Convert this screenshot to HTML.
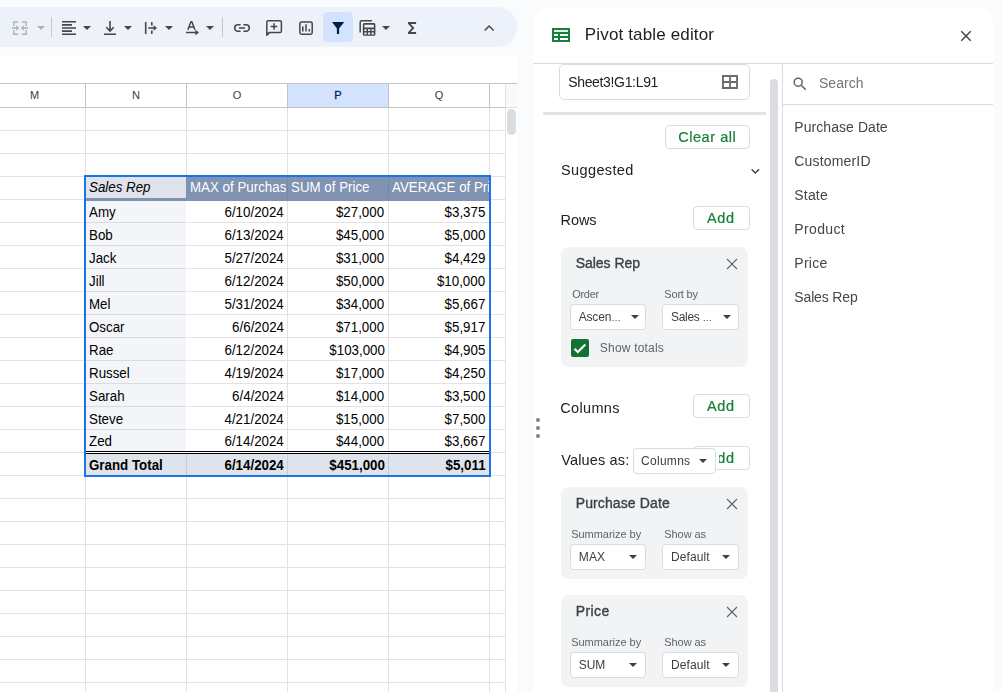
<!DOCTYPE html>
<html lang="en">
<head>
<meta charset="utf-8">
<title>Pivot table editor</title>
<style>
*{box-sizing:border-box;margin:0;padding:0}
html,body{width:1001px;height:692px;overflow:hidden;background:#f9fbfd}
body{position:relative;font-family:"Liberation Sans",Arial,sans-serif;font-size:13px;color:#202124}
.abs,.t,svg.i{position:absolute}
.t{white-space:nowrap;line-height:20px;height:20px}
#toolbar{position:absolute;left:-30px;top:7px;width:547px;height:40px;background:#edf2fa;border-radius:20px}
#tbicons{position:absolute;left:0;top:0;width:517px;height:55px}
.sep{position:absolute;top:17px;width:1px;height:20px;background:#c7c7c7}
#sheet{position:absolute;left:0;top:55px;width:517px;height:637px;background:#fff;overflow:hidden}
#grid{position:absolute;left:0;top:0;width:506px;height:637px}
.hl{position:absolute;left:0;width:506px;height:1px;background:#e2e2e2}
.vl{position:absolute;top:52px;width:1px;height:585px;background:#e2e2e2}
.ch{position:absolute;top:28px;height:25px;border-top:1px solid #c4c4c4;border-bottom:1px solid #c4c4c4;border-right:1px solid #c4c4c4;text-align:center;font-size:11px;line-height:23px;color:#3a3c3c;background:#fff}
.ch.selc{background:#d3e3fd;color:#041e49;-webkit-text-stroke:.3px #041e49}
.cell{position:absolute;height:22px;line-height:22px;font-size:14px;color:#000;white-space:nowrap;overflow:hidden;padding:0 3px}
.cell span{display:inline-block;transform:scaleX(.952);transform-origin:0 50%}
.cell.r span{transform:translateX(-.5px) scaleX(.952);transform-origin:100% 50%}
.r{text-align:right}
.b{font-weight:700}
#panel{position:absolute;left:533px;top:7px;width:460px;height:685px;background:#fff;border-radius:16px 16px 0 0;overflow:hidden;will-change:transform}
.card{position:absolute;left:28px;width:187px;background:#f1f3f4;border-radius:8px}
.dd{position:absolute;height:26px;background:#fff;border:1px solid #dadce0;border-radius:4px}
.btn{position:absolute;height:24px;background:#fff;border:1px solid #dadce0;border-radius:4px}
.field{font-size:14px;color:#444746}
.el{font-size:.8em}
</style>
</head>
<body>

<div id="toolbar" role="toolbar"></div>
<div id="tbicons">
<svg class="i" style="left:0;top:0" width="517" height="55" viewBox="0 0 517 55" aria-hidden="true"><g fill="none" stroke="#444746" stroke-width="1.5" opacity=".36"><path d="M18 21.9h-4.2v3.8M13.8 30.3v3.9h4.2M22 21.9h4.2v3.8M26.2 30.3v3.9h-4.2"/><path d="M12 28h5.4M16.2 26l2 2-2 2M28 28h-5.4M23.8 26l-2 2 2 2" stroke-width="1.3"/></g><path d="M37 26h8l-4 4z" fill="#444746" opacity="0.38"/><path d="M62 21h14v1.6h-14zM62 24.1h10v1.6h-10zM62 27.2h14v1.6h-14zM62 30.3h10v1.6h-10zM62 33.4h14v1.6h-14z" fill="#444746"/><path d="M83 26h8l-4 4z" fill="#444746"/><g fill="none" stroke="#444746" stroke-width="1.6"><path d="M110 21v10M106.3 27.3l3.7 3.7 3.7-3.7M104 34.2h12"/></g><path d="M124 26h8l-4 4z" fill="#444746"/><g fill="none" stroke="#444746" stroke-width="1.6"><path d="M145.7 22v12M151.8 22v3.6M151.8 30.4v3.6M148.2 28h7"/></g><path d="M153.6 25.2l3.4 2.8-3.4 2.8z" fill="#444746"/><path d="M165 26h8l-4 4z" fill="#444746"/><g fill="none" stroke="#444746" stroke-width="1.5"><path d="M187.9 29.8l3-8h1l3 8M189.2 27.1h4.4M186 32.5h10" stroke-linejoin="bevel"/></g><path d="M195.4 29.8l3.6 2.7-3.6 2.7z" fill="#444746"/><path d="M206 26h8l-4 4z" fill="#444746"/><g fill="none" stroke="#444746" stroke-width="1.6"><path d="M240.6 24.8h-2.7a3.2 3.2 0 0 0 0 6.4h2.7M243.4 24.8h2.7a3.2 3.2 0 0 1 0 6.4h-2.7M239 28h6"/></g><path d="M266.8 35.2V22.2a1.4 1.4 0 0 1 1.4-1.4h11.8a1.4 1.4 0 0 1 1.4 1.4v9a1.4 1.4 0 0 1-1.4 1.4h-10.6z" fill="none" stroke="#444746" stroke-width="1.5" stroke-linejoin="round"/><path d="M266.8 32.6v2.9l2.6-2.9z" fill="#444746"/><path d="M274 23.2v6.6M270.7 26.5h6.6" fill="none" stroke="#444746" stroke-width="1.5"/><rect x="299.9" y="21.9" width="12.3" height="12.3" rx="1.6" fill="none" stroke="#444746" stroke-width="1.5"/><path d="M302.8 26.6v5M306 24.3v7.3M309.3 29v2.6" fill="none" stroke="#444746" stroke-width="1.5"/><rect x="323" y="12" width="30" height="30" rx="4.5" fill="#d3e3fd"/><path d="M332 22h12.2l-5.1 6.6v5.4h-2.2v-5.4z" fill="#041e49"/><path d="M372 20.8h-10.6a1.2 1.2 0 0 0-1.2 1.2v10.4" fill="none" stroke="#444746" stroke-width="1.5"/><path fill-rule="evenodd" fill="#444746" d="M364.3 22.9h9.6a1.5 1.5 0 0 1 1.5 1.5v9.8a1.5 1.5 0 0 1-1.5 1.5h-9.6a1.5 1.5 0 0 1-1.5-1.5v-9.8a1.5 1.5 0 0 1 1.5-1.5zM364.4 24.8v2.7h9.4v-2.7zM364.4 29.3v1.8h2.2v-1.8zM368 29.3v1.8h2.2v-1.8zM371.6 29.3v1.8h2.2v-1.8zM364.4 32.6v1.8h2.2v-1.8zM368 32.6v1.8h2.2v-1.8zM371.6 32.6v1.8h2.2v-1.8z"/><path d="M382 26h8l-4 4z" fill="#444746"/><path d="M408 22h8.1v1.9h-5.4l3.7 4.1-3.7 4.1h5.4v1.9h-8.1v-1.7l3.9-4.3-3.9-4.3z" fill="#444746"/><path d="M484.6 30.5l4.5-4.5 4.5 4.5" fill="none" stroke="#444746" stroke-width="1.5"/></svg>
<div class="sep" style="left:51px"></div><div class="sep" style="left:222px"></div>
</div>
<div id="sheet">
<div id="grid">
<div class="hl" style="top:75px"></div>
<div class="hl" style="top:98px"></div>
<div class="hl" style="top:121px"></div>
<div class="hl" style="top:144px"></div>
<div class="hl" style="top:167px"></div>
<div class="hl" style="top:190px"></div>
<div class="hl" style="top:213px"></div>
<div class="hl" style="top:236px"></div>
<div class="hl" style="top:259px"></div>
<div class="hl" style="top:282px"></div>
<div class="hl" style="top:305px"></div>
<div class="hl" style="top:328px"></div>
<div class="hl" style="top:351px"></div>
<div class="hl" style="top:374px"></div>
<div class="hl" style="top:397px"></div>
<div class="hl" style="top:420px"></div>
<div class="hl" style="top:443px"></div>
<div class="hl" style="top:466px"></div>
<div class="hl" style="top:489px"></div>
<div class="hl" style="top:512px"></div>
<div class="hl" style="top:535px"></div>
<div class="hl" style="top:558px"></div>
<div class="hl" style="top:581px"></div>
<div class="hl" style="top:604px"></div>
<div class="hl" style="top:627px"></div>
<div class="vl" style="left:85px"></div>
<div class="vl" style="left:186px"></div>
<div class="vl" style="left:287px"></div>
<div class="vl" style="left:388px"></div>
<div class="vl" style="left:489px"></div>
<div class="vl" style="left:505px"></div>
</div>
<div class="abs" style="left:0;top:28px;width:517px;height:25px;background:#f8f9fa;border-top:1px solid #c4c4c4;border-bottom:1px solid #e0e0e0"></div>
<div class="ch" style="left:-16px;width:102px">M</div>
<div class="ch" style="left:86px;width:101px">N</div>
<div class="ch" style="left:187px;width:101px">O</div>
<div class="ch selc" style="left:288px;width:101px">P</div>
<div class="ch" style="left:389px;width:101px">Q</div>
<div class="ch" style="left:490px;width:16px;border-right-color:#e2e2e2"></div>
<div class="abs" style="left:507px;top:54px;width:9px;height:26px;border-radius:4.5px;background:#dadce0"></div>
<div id="pivot" role="table">
<div class="abs" style="left:86px;top:122px;width:404px;height:24px;background:#8093b3"></div>
<div class="abs" style="left:86px;top:122px;width:100px;height:21px;background:#dfe3eb"></div>
<div class="abs" style="left:287px;top:122px;width:1px;height:21px;background:#7686a4"></div>
<div class="abs" style="left:388px;top:122px;width:1px;height:21px;background:#7686a4"></div>
<div class="cell" style="left:86px;top:122px;width:99px;height:20px;line-height:20px;font-style:italic;color:#000"><span>Sales Rep</span></div>
<div class="cell" style="left:187px;top:122px;width:99px;height:20px;line-height:20px;color:#fff"><span>MAX of Purchase Date</span></div>
<div class="cell" style="left:288px;top:122px;width:99px;height:20px;line-height:20px;color:#fff"><span>SUM of Price</span></div>
<div class="cell" style="left:389px;top:122px;width:100px;height:20px;line-height:20px;color:#fff"><span>AVERAGE of Price</span></div>
<div class="abs" style="left:86px;top:146px;width:100px;height:21px;background:#f4f5f8"></div>
<div class="abs" style="left:186px;top:146px;width:1px;height:22px;background:#fff"></div>
<div class="abs" style="left:86px;top:167px;width:100px;height:1px;background:#d9dbde"></div>
<div class="cell" style="left:86px;top:146px;width:100px"><span>Amy</span></div>
<div class="cell r" style="left:187px;top:146px;width:100px"><span>6/10/2024</span></div>
<div class="cell r" style="left:288px;top:146px;width:100px"><span>$27,000</span></div>
<div class="cell r" style="left:389px;top:146px;width:100px"><span>$3,375</span></div>
<div class="abs" style="left:86px;top:168px;width:100px;height:22px;background:#f4f5f8"></div>
<div class="abs" style="left:186px;top:168px;width:1px;height:23px;background:#fff"></div>
<div class="abs" style="left:86px;top:190px;width:100px;height:1px;background:#d9dbde"></div>
<div class="cell" style="left:86px;top:169px;width:100px"><span>Bob</span></div>
<div class="cell r" style="left:187px;top:169px;width:100px"><span>6/13/2024</span></div>
<div class="cell r" style="left:288px;top:169px;width:100px"><span>$45,000</span></div>
<div class="cell r" style="left:389px;top:169px;width:100px"><span>$5,000</span></div>
<div class="abs" style="left:86px;top:191px;width:100px;height:22px;background:#f4f5f8"></div>
<div class="abs" style="left:186px;top:191px;width:1px;height:23px;background:#fff"></div>
<div class="abs" style="left:86px;top:213px;width:100px;height:1px;background:#d9dbde"></div>
<div class="cell" style="left:86px;top:192px;width:100px"><span>Jack</span></div>
<div class="cell r" style="left:187px;top:192px;width:100px"><span>5/27/2024</span></div>
<div class="cell r" style="left:288px;top:192px;width:100px"><span>$31,000</span></div>
<div class="cell r" style="left:389px;top:192px;width:100px"><span>$4,429</span></div>
<div class="abs" style="left:86px;top:214px;width:100px;height:22px;background:#f4f5f8"></div>
<div class="abs" style="left:186px;top:214px;width:1px;height:23px;background:#fff"></div>
<div class="abs" style="left:86px;top:236px;width:100px;height:1px;background:#d9dbde"></div>
<div class="cell" style="left:86px;top:215px;width:100px"><span>Jill</span></div>
<div class="cell r" style="left:187px;top:215px;width:100px"><span>6/12/2024</span></div>
<div class="cell r" style="left:288px;top:215px;width:100px"><span>$50,000</span></div>
<div class="cell r" style="left:389px;top:215px;width:100px"><span>$10,000</span></div>
<div class="abs" style="left:86px;top:237px;width:100px;height:22px;background:#f4f5f8"></div>
<div class="abs" style="left:186px;top:237px;width:1px;height:23px;background:#fff"></div>
<div class="abs" style="left:86px;top:259px;width:100px;height:1px;background:#d9dbde"></div>
<div class="cell" style="left:86px;top:238px;width:100px"><span>Mel</span></div>
<div class="cell r" style="left:187px;top:238px;width:100px"><span>5/31/2024</span></div>
<div class="cell r" style="left:288px;top:238px;width:100px"><span>$34,000</span></div>
<div class="cell r" style="left:389px;top:238px;width:100px"><span>$5,667</span></div>
<div class="abs" style="left:86px;top:260px;width:100px;height:22px;background:#f4f5f8"></div>
<div class="abs" style="left:186px;top:260px;width:1px;height:23px;background:#fff"></div>
<div class="abs" style="left:86px;top:282px;width:100px;height:1px;background:#d9dbde"></div>
<div class="cell" style="left:86px;top:261px;width:100px"><span>Oscar</span></div>
<div class="cell r" style="left:187px;top:261px;width:100px"><span>6/6/2024</span></div>
<div class="cell r" style="left:288px;top:261px;width:100px"><span>$71,000</span></div>
<div class="cell r" style="left:389px;top:261px;width:100px"><span>$5,917</span></div>
<div class="abs" style="left:86px;top:283px;width:100px;height:22px;background:#f4f5f8"></div>
<div class="abs" style="left:186px;top:283px;width:1px;height:23px;background:#fff"></div>
<div class="abs" style="left:86px;top:305px;width:100px;height:1px;background:#d9dbde"></div>
<div class="cell" style="left:86px;top:284px;width:100px"><span>Rae</span></div>
<div class="cell r" style="left:187px;top:284px;width:100px"><span>6/12/2024</span></div>
<div class="cell r" style="left:288px;top:284px;width:100px"><span>$103,000</span></div>
<div class="cell r" style="left:389px;top:284px;width:100px"><span>$4,905</span></div>
<div class="abs" style="left:86px;top:306px;width:100px;height:22px;background:#f4f5f8"></div>
<div class="abs" style="left:186px;top:306px;width:1px;height:23px;background:#fff"></div>
<div class="abs" style="left:86px;top:328px;width:100px;height:1px;background:#d9dbde"></div>
<div class="cell" style="left:86px;top:307px;width:100px"><span>Russel</span></div>
<div class="cell r" style="left:187px;top:307px;width:100px"><span>4/19/2024</span></div>
<div class="cell r" style="left:288px;top:307px;width:100px"><span>$17,000</span></div>
<div class="cell r" style="left:389px;top:307px;width:100px"><span>$4,250</span></div>
<div class="abs" style="left:86px;top:329px;width:100px;height:22px;background:#f4f5f8"></div>
<div class="abs" style="left:186px;top:329px;width:1px;height:23px;background:#fff"></div>
<div class="abs" style="left:86px;top:351px;width:100px;height:1px;background:#d9dbde"></div>
<div class="cell" style="left:86px;top:330px;width:100px"><span>Sarah</span></div>
<div class="cell r" style="left:187px;top:330px;width:100px"><span>6/4/2024</span></div>
<div class="cell r" style="left:288px;top:330px;width:100px"><span>$14,000</span></div>
<div class="cell r" style="left:389px;top:330px;width:100px"><span>$3,500</span></div>
<div class="abs" style="left:86px;top:352px;width:100px;height:22px;background:#f4f5f8"></div>
<div class="abs" style="left:186px;top:352px;width:1px;height:23px;background:#fff"></div>
<div class="abs" style="left:86px;top:374px;width:100px;height:1px;background:#d9dbde"></div>
<div class="cell" style="left:86px;top:353px;width:100px"><span>Steve</span></div>
<div class="cell r" style="left:187px;top:353px;width:100px"><span>4/21/2024</span></div>
<div class="cell r" style="left:288px;top:353px;width:100px"><span>$15,000</span></div>
<div class="cell r" style="left:389px;top:353px;width:100px"><span>$7,500</span></div>
<div class="abs" style="left:86px;top:375px;width:100px;height:22px;background:#f4f5f8"></div>
<div class="abs" style="left:186px;top:375px;width:1px;height:23px;background:#fff"></div>
<div class="cell" style="left:86px;top:375px;width:100px"><span>Zed</span></div>
<div class="cell r" style="left:187px;top:375px;width:100px"><span>6/14/2024</span></div>
<div class="cell r" style="left:288px;top:375px;width:100px"><span>$44,000</span></div>
<div class="cell r" style="left:389px;top:375px;width:100px"><span>$3,667</span></div>
<div class="abs" style="left:86px;top:396px;width:404px;height:3px;background:#fff;border-top:1px solid #000;border-bottom:1px solid #000"></div>
<div class="abs" style="left:86px;top:399px;width:404px;height:21px;background:#dfe3eb"></div>
<div class="abs" style="left:186px;top:399px;width:1px;height:21px;background:#c9cdd4"></div>
<div class="abs" style="left:287px;top:399px;width:1px;height:21px;background:#c9cdd4"></div>
<div class="abs" style="left:388px;top:399px;width:1px;height:21px;background:#c9cdd4"></div>
<div class="cell b" style="left:86px;top:399px;width:100px"><span>Grand Total</span></div>
<div class="cell b r" style="left:187px;top:399px;width:100px"><span>6/14/2024</span></div>
<div class="cell b r" style="left:288px;top:399px;width:100px"><span>$451,000</span></div>
<div class="cell b r" style="left:389px;top:399px;width:100px"><span>$5,011</span></div>
</div>
<div class="abs" style="left:84px;top:120px;width:407px;height:302px;border:2px solid #1a73e8"></div>
</div>
<div id="panel">
<svg class="i" style="left:19px;top:21px" width="18" height="14" viewBox="0 0 18 14" aria-hidden="true"><path fill-rule="evenodd" fill="#188038" d="M0 0h18v14H0zM2 2v2h14V2zM2 6v2h4V6zM8 6v2h8V6zM2 10v2h4v-2zM8 10v2h8v-2z"/><path d="M2 2h14v2H2z" fill="#e2f2e6"/></svg>
<span id="title" class="t " style="left:51.84px;top:17.50px;font-size:17px;color:#202124;letter-spacing:0.150px;">Pivot table editor</span>
<svg class="i" style="left:427px;top:23px" width="12" height="12" viewBox="0 0 12 12" aria-hidden="true"><path d="M1.3 1.3l9.4 9.4M10.7 1.3l-9.4 9.4" stroke="#444746" stroke-width="1.5" fill="none"/></svg>
<div class="abs" style="left:0;top:56px;width:460px;height:1px;background:#dadce0"></div>
<div id="editor" class="abs" style="left:0;top:57px;width:249px;height:628px;overflow:hidden">
<div class="abs" style="left:26px;top:0px;width:191px;height:36px;border:1px solid #dadce0;border-radius:5px"></div>
<span id="range" class="t " style="left:35.20px;top:8.00px;font-size:14px;color:#202124;letter-spacing:-0.334px;">Sheet3!G1:L91</span>
<svg class="i" style="left:189px;top:11px" width="16" height="14" viewBox="0 0 16 14" aria-hidden="true"><path fill-rule="evenodd" fill="#6b6b6b" d="M0 0h16v14H0zM1.9 1.9v4.2h5.2V1.9zM8.9 1.9v4.2h5.2V1.9zM1.9 7.9v4.2h5.2V7.9zM8.9 7.9v4.2h5.2V7.9z"/></svg>
<div class="abs" style="left:10px;top:48px;width:223px;height:3px;background:#e3e3e3"></div>
<div class="btn" style="left:132px;top:61px;width:85px"></div>
<span id="clear" class="t " style="left:145.16px;top:63.00px;font-size:14.5px;color:#188038;letter-spacing:0.562px;-webkit-text-stroke:.22px #188038;">Clear all</span>
<span id="sugg" class="t " style="left:28.00px;top:96.00px;font-size:14.5px;color:#202124;letter-spacing:0.380px;">Suggested</span>
<svg class="i" style="left:217px;top:103px" width="12" height="9" viewBox="0 0 12 9" aria-hidden="true"><path d="M1.6 2.3l3.7 3.7 3.7-3.7" stroke="#444746" stroke-width="1.5" fill="none"/></svg>
<span id="rows" class="t " style="left:27.52px;top:146.00px;font-size:14.5px;color:#202124;letter-spacing:-0.053px;">Rows</span>
<div class="btn" style="left:160px;top:142px;width:57px"></div>
<span id="add1" class="t " style="left:173.96px;top:144.00px;font-size:14.5px;color:#188038;letter-spacing:0.640px;-webkit-text-stroke:.22px #188038;">Add</span>
<div class="card" style="top:183px;height:120px"></div>
<span id="c1t" class="t " style="left:42.68px;top:189.00px;font-size:14px;color:#3c4043;letter-spacing:-0.020px;-webkit-text-stroke:.35px #3c4043;">Sales Rep</span>
<svg class="i" style="left:192.79999999999995px;top:193.8px" width="12" height="12" viewBox="0 0 12 12" aria-hidden="true"><path d="M1 1l10 10M11 1L1 11" stroke="#5f6368" stroke-width="1.1" fill="none"/></svg>
<span id="c1l1" class="t " style="left:39.16px;top:220.00px;font-size:11px;color:#5f6368;letter-spacing:-0.280px;">Order</span>
<span id="c1l2" class="t " style="left:131.32px;top:220.00px;font-size:11px;color:#5f6368;letter-spacing:-0.187px;">Sort by</span>
<div class="dd" style="left:37px;top:240px;width:76px"></div>
<div class="dd" style="left:129px;top:240px;width:77px"></div>
<span id="c1v1" class="t " style="left:45.64px;top:243.00px;font-size:12px;color:#3c4043;letter-spacing:-0.148px;">Ascen<span class="el">…</span></span>
<span id="c1v2" class="t " style="left:138.00px;top:243.00px;font-size:12px;color:#3c4043;letter-spacing:-0.293px;">Sales <span class="el">…</span></span>
<svg class="i" style="left:98px;top:251px" width="8" height="4" viewBox="0 0 8 4" aria-hidden="true"><path d="M0 0h8L4 4z" fill="#3c4043"/></svg>
<svg class="i" style="left:190px;top:251px" width="8" height="4" viewBox="0 0 8 4" aria-hidden="true"><path d="M0 0h8L4 4z" fill="#3c4043"/></svg>
<div class="abs" style="left:38px;top:275px;width:18px;height:18px;border-radius:2px;background:#137333"></div>
<svg class="i" style="left:38px;top:275px" width="18" height="18" viewBox="0 0 18 18" aria-hidden="true"><path d="M3.5 9.8l3.3 3.3 7.5-7.6" stroke="#fff" stroke-width="2.1" fill="none"/></svg>
<span id="c1cb" class="t " style="left:66.84px;top:274.00px;font-size:12px;color:#5f6368;letter-spacing:0.192px;">Show totals</span>
<span id="cols" class="t " style="left:27.16px;top:334.00px;font-size:14.5px;color:#202124;letter-spacing:0.350px;">Columns</span>
<div class="btn" style="left:160px;top:330px;width:57px"></div>
<span id="add2" class="t " style="left:173.96px;top:332.00px;font-size:14.5px;color:#188038;letter-spacing:0.640px;-webkit-text-stroke:.22px #188038;">Add</span>
<span id="vals" class="t " style="left:28.16px;top:386.00px;font-size:14.5px;color:#202124;letter-spacing:0.161px;">Values as:</span>
<div class="btn" style="left:160px;top:382px;width:57px"></div>
<span id="add3" class="t " style="left:173.96px;top:384.00px;font-size:14.5px;color:#188038;letter-spacing:0.640px;-webkit-text-stroke:.22px #188038;">Add</span>
<div class="abs" style="left:183px;top:386px;width:2.5px;height:16px;background:#fff"></div>
<div class="dd" style="left:100px;top:384px;width:83px"></div>
<span id="vcol" class="t " style="left:108.00px;top:387.00px;font-size:12px;color:#3c4043;letter-spacing:0.293px;">Columns</span>
<svg class="i" style="left:166px;top:395px" width="8" height="4" viewBox="0 0 8 4" aria-hidden="true"><path d="M0 0h8L4 4z" fill="#3c4043"/></svg>
<div class="card" style="top:423px;height:92px"></div>
<span id="c2t" class="t " style="left:42.68px;top:429.00px;font-size:14px;color:#3c4043;letter-spacing:0.120px;-webkit-text-stroke:.35px #3c4043;">Purchase Date</span>
<svg class="i" style="left:192.79999999999995px;top:433.8px" width="12" height="12" viewBox="0 0 12 12" aria-hidden="true"><path d="M1 1l10 10M11 1L1 11" stroke="#5f6368" stroke-width="1.1" fill="none"/></svg>
<span id="c2l1" class="t " style="left:38.16px;top:460.00px;font-size:11px;color:#5f6368;letter-spacing:-0.027px;">Summarize by</span>
<span id="c2l2" class="t " style="left:131.32px;top:460.00px;font-size:11px;color:#5f6368;letter-spacing:-0.081px;">Show as</span>
<div class="dd" style="left:37px;top:480px;width:76px"></div>
<div class="dd" style="left:129px;top:480px;width:77px"></div>
<span id="c2v1" class="t " style="left:45.84px;top:483.00px;font-size:12px;color:#3c4043;letter-spacing:0.080px;">MAX</span>
<span id="c2v2" class="t " style="left:138.00px;top:483.00px;font-size:12px;color:#3c4043;letter-spacing:0.080px;">Default</span>
<svg class="i" style="left:96px;top:491px" width="8" height="4" viewBox="0 0 8 4" aria-hidden="true"><path d="M0 0h8L4 4z" fill="#3c4043"/></svg>
<svg class="i" style="left:189px;top:491px" width="8" height="4" viewBox="0 0 8 4" aria-hidden="true"><path d="M0 0h8L4 4z" fill="#3c4043"/></svg>
<div class="card" style="top:531px;height:92px"></div>
<span id="c3t" class="t " style="left:42.68px;top:537.00px;font-size:14px;color:#3c4043;letter-spacing:0.440px;-webkit-text-stroke:.35px #3c4043;">Price</span>
<svg class="i" style="left:192.79999999999995px;top:541.8px" width="12" height="12" viewBox="0 0 12 12" aria-hidden="true"><path d="M1 1l10 10M11 1L1 11" stroke="#5f6368" stroke-width="1.1" fill="none"/></svg>
<span id="c3l1" class="t " style="left:38.16px;top:568.00px;font-size:11px;color:#5f6368;letter-spacing:-0.027px;">Summarize by</span>
<span id="c3l2" class="t " style="left:131.32px;top:568.00px;font-size:11px;color:#5f6368;letter-spacing:-0.081px;">Show as</span>
<div class="dd" style="left:37px;top:588px;width:76px"></div>
<div class="dd" style="left:129px;top:588px;width:77px"></div>
<span id="c3v1" class="t " style="left:45.84px;top:591.00px;font-size:12px;color:#3c4043;letter-spacing:-0.160px;">SUM</span>
<span id="c3v2" class="t " style="left:138.00px;top:591.00px;font-size:12px;color:#3c4043;letter-spacing:0.080px;">Default</span>
<svg class="i" style="left:96px;top:599px" width="8" height="4" viewBox="0 0 8 4" aria-hidden="true"><path d="M0 0h8L4 4z" fill="#3c4043"/></svg>
<svg class="i" style="left:189px;top:599px" width="8" height="4" viewBox="0 0 8 4" aria-hidden="true"><path d="M0 0h8L4 4z" fill="#3c4043"/></svg>
<div class="abs" style="left:237px;top:15px;width:8px;height:640px;border-radius:4px;background:#dadce0"></div>
</div>
<svg class="i" style="left:2px;top:410px" width="6" height="22" viewBox="0 0 6 22" aria-hidden="true"><g fill="#828282"><circle cx="3" cy="3" r="2"/><circle cx="3" cy="11" r="2"/><circle cx="3" cy="19" r="2"/></g></svg>
<div class="abs" style="left:249px;top:57px;width:1px;height:628px;background:#dadce0"></div>
<div id="fields" class="abs" style="left:250px;top:57px;width:210px;height:628px">
<svg class="i" style="left:10px;top:13px" width="14" height="14" viewBox="0 0 14 14" aria-hidden="true"><circle cx="5.2" cy="5.2" r="4" fill="none" stroke="#5f6368" stroke-width="1.5"/><path d="M8.2 8.2l4.6 4.6" stroke="#5f6368" stroke-width="1.6" fill="none"/></svg>
<span id="search" class="t " style="left:35.88px;top:9.00px;font-size:14px;color:#70757a;letter-spacing:0.064px;">Search</span>
<div class="abs" style="left:0;top:40px;width:210px;height:1px;background:#dadce0"></div>
<span id="f0" class="t field" style="left:11.36px;top:53.00px;font-size:14px;color:#444746;letter-spacing:0.054px;">Purchase Date</span>
<span id="f1" class="t field" style="left:11.16px;top:87.00px;font-size:14px;color:#444746;letter-spacing:0.192px;">CustomerID</span>
<span id="f2" class="t field" style="left:11.36px;top:121.00px;font-size:14px;color:#444746;letter-spacing:0.160px;">State</span>
<span id="f3" class="t field" style="left:11.36px;top:155.00px;font-size:14px;color:#444746;letter-spacing:0.346px;">Product</span>
<span id="f4" class="t field" style="left:11.36px;top:189.00px;font-size:14px;color:#444746;letter-spacing:0.240px;">Price</span>
<span id="f5" class="t field" style="left:11.36px;top:223.00px;font-size:14px;color:#444746;letter-spacing:-0.160px;">Sales Rep</span>
</div>
</div>
</body></html>
